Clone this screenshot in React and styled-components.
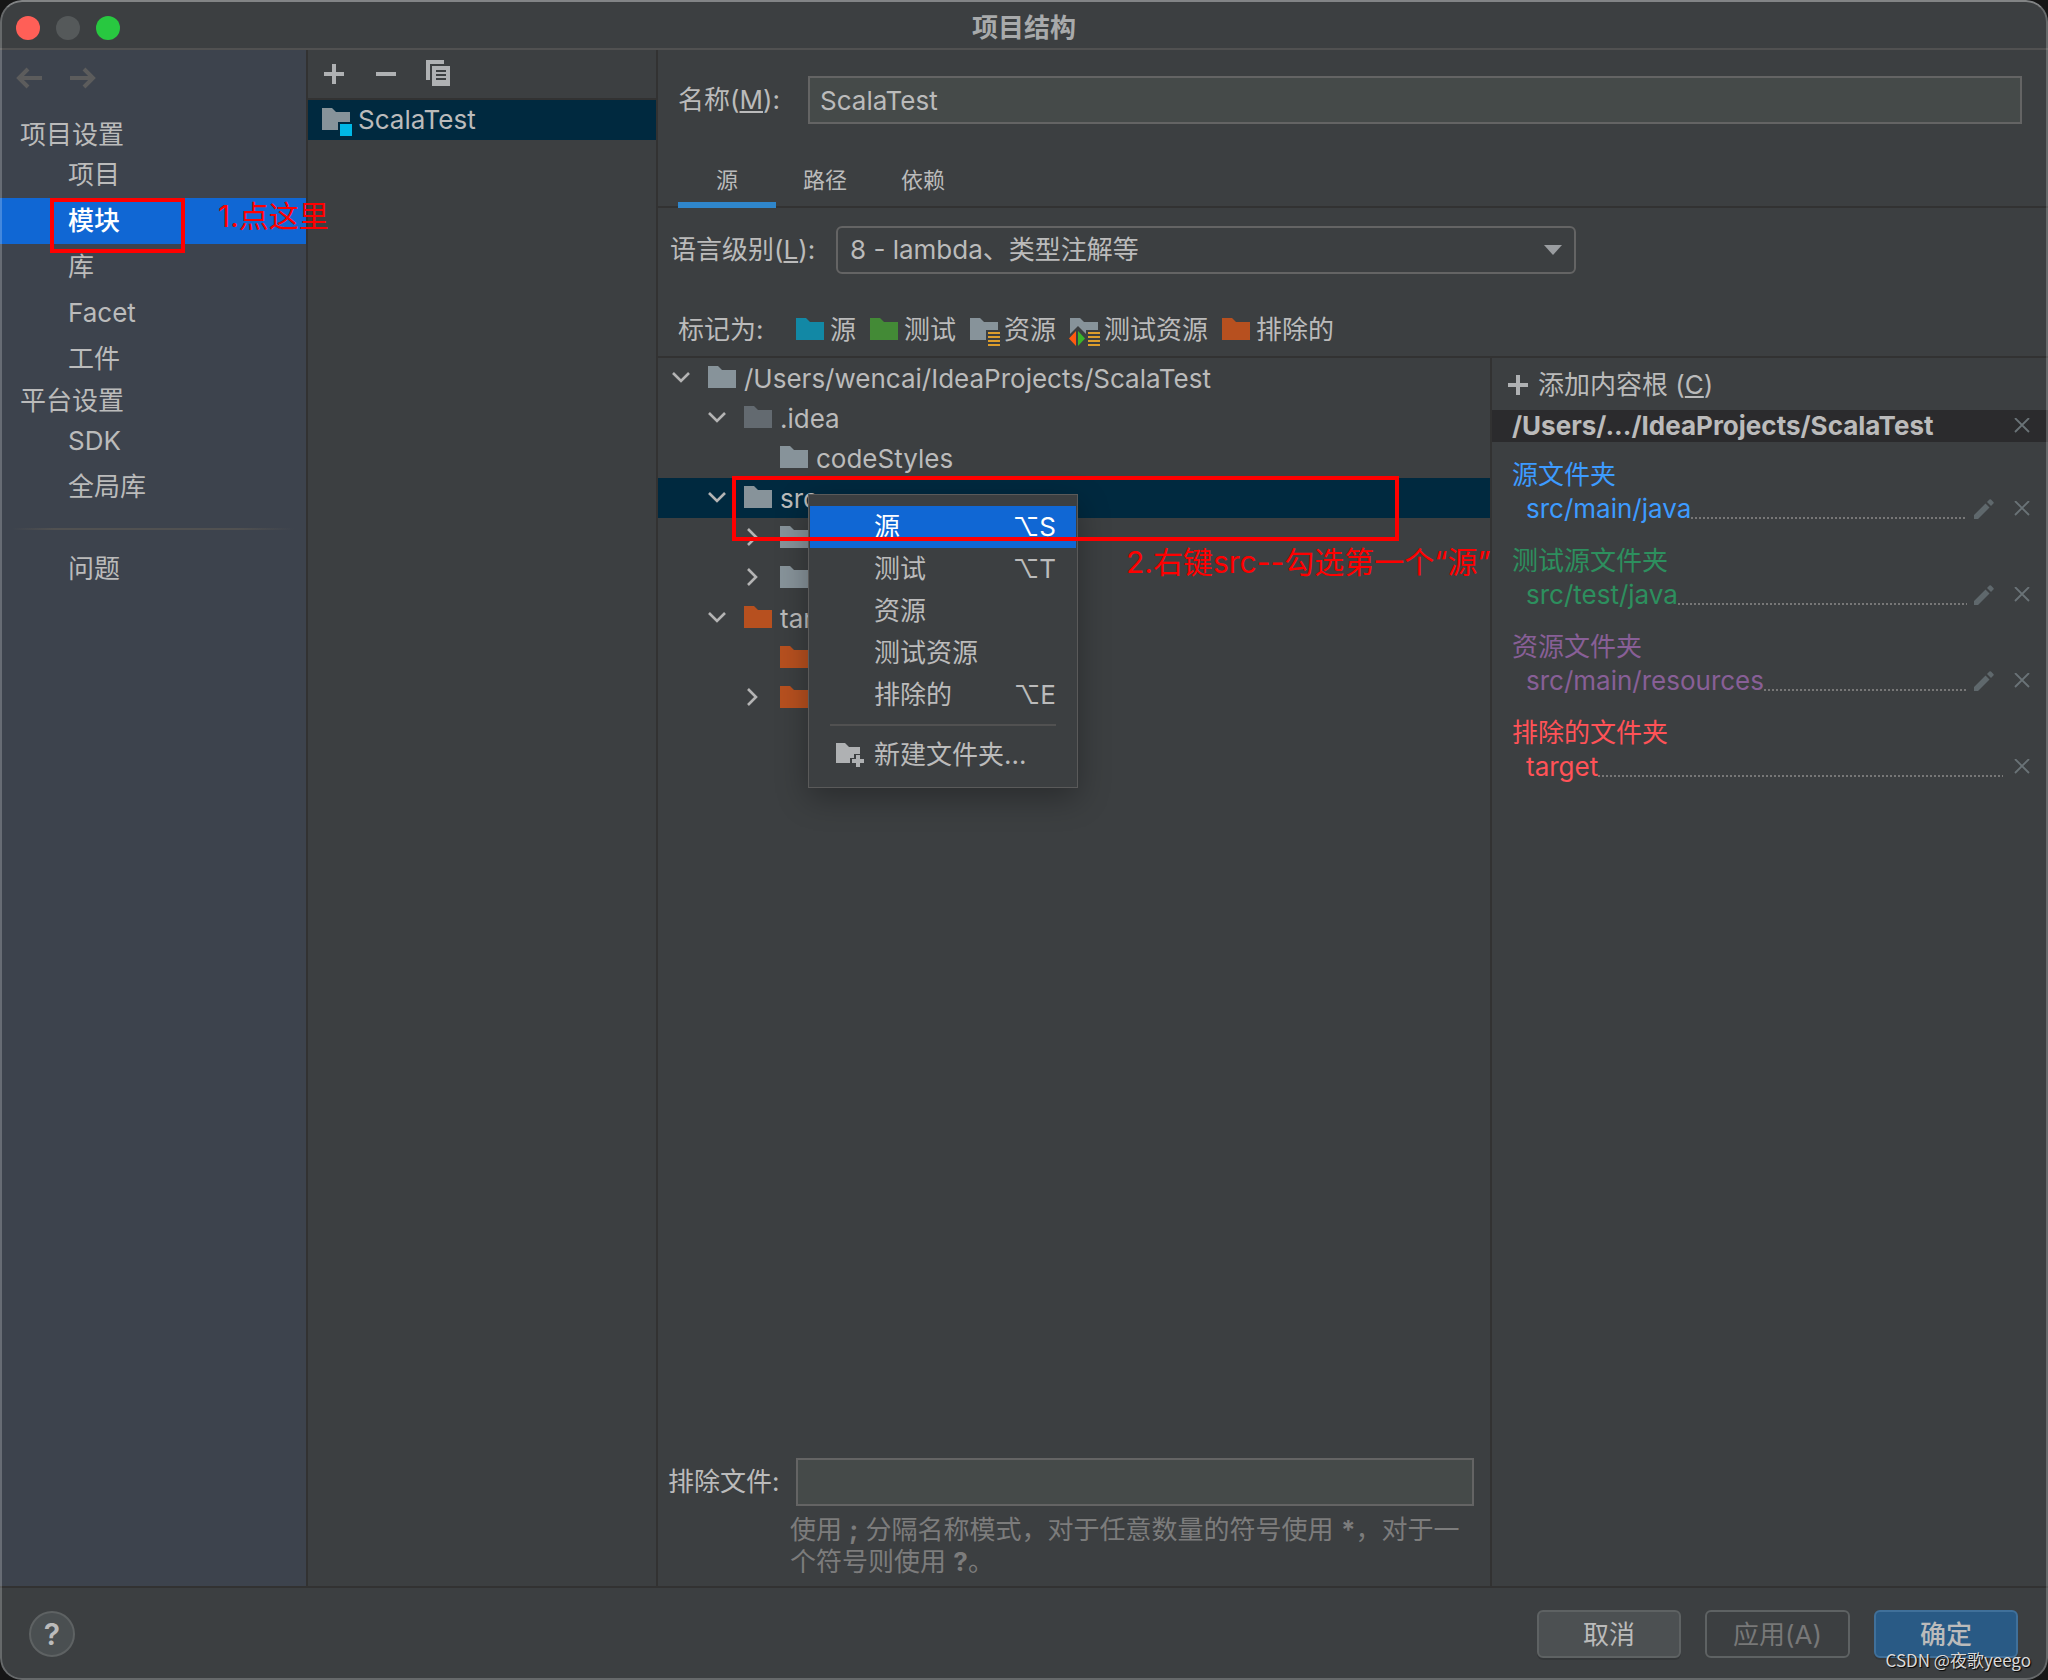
import React from 'react';
import styled, { createGlobalStyle, css } from 'styled-components';

const TEXT = '#bbbbbb';
const PANEL = '#3c3f41';
const LINE = '#323232';
const FIELD_BORDER = '#646464';
const SELECTION = '#00293f';
const ACCENT = '#1067d4';
const ANNOTATION = '#ff0000';
const FOLDER_GREY = '#87939a';
const FOLDER_DIM = '#636a70';
const FOLDER_ORANGE = '#b7501f';

const FONT_STACK = "Inter, 'Noto Sans CJK SC', sans-serif";

const GlobalStyle = createGlobalStyle`
  * {
    box-sizing: border-box;
  }

  body {
    margin: 0;
    background: #161616;
    color: ${TEXT};
    font-family: ${FONT_STACK};
    font-size: 26px;
    line-height: 32px;
  }

  button, input, select {
    margin: 0;
    font: inherit;
    color: inherit;
  }
`;

const PLAIN_BUTTON = css`
  display: flex;
  align-items: center;
  padding: 0;
  border: 0;
  background: none;
  text-align: left;
  white-space: nowrap;
  cursor: pointer;
`;

const Window = styled.div`
  position: relative;
  display: flex;
  flex-direction: column;
  min-height: 100vh;
  border-radius: 22px;
  background: ${PANEL};
  overflow: hidden;

  &::after {
    content: '';
    position: absolute;
    inset: 0;
    border: 2px solid rgba(255, 255, 255, 0.22);
    border-top-color: rgba(255, 255, 255, 0.36);
    border-radius: 22px;
    pointer-events: none;
  }
`;

const TitleBar = styled.header`
  display: grid;
  grid-template-columns: 1fr auto 1fr;
  align-items: center;
  height: 50px;
  padding: 8px 16px 0;
  border-bottom: 2px solid #515151;
`;

const Lights = styled.div`
  display: flex;
  gap: 16px;
`;

const Light = styled.button`
  width: 24px;
  height: 24px;
  padding: 0;
  border: 0;
  border-radius: 50%;
  background: ${({ $color }) => $color};
`;

const Title = styled.h1`
  margin: 0;
  font-size: 26px;
  line-height: 32px;
  font-weight: 700;
  color: #a8aaab;
`;

const Body = styled.div`
  display: grid;
  grid-template-columns: 308px 350px 1fr;
  flex: 1;
`;

const Sidebar = styled.nav`
  border-right: 2px solid ${LINE};
  background: #3d434d;
`;

const History = styled.div`
  display: flex;
  align-items: flex-start;
  gap: 26px;
  padding: 14px 15px 10px;
  height: 66px;
`;

const HistoryButton = styled.button`
  ${PLAIN_BUTTON};
  color: #5c5c5c;
`;

const SectionTitle = styled.h2`
  margin: 0;
  padding: 3px 20px 1px;
  font-size: 26px;
  line-height: 32px;
  font-weight: 400;
`;

const NavItem = styled.div`
  position: relative;
`;

const NavLink = styled.a`
  display: block;
  padding: 7px 68px;
  color: ${({ $active }) => ($active ? '#ffffff' : TEXT)};
  font-weight: ${({ $active }) => ($active ? 500 : 400)};
  background: ${({ $active }) => ($active ? ACCENT : 'none')};
  text-decoration: none;
`;

const NavDivider = styled.hr`
  height: 2px;
  margin: 18px 12px 16px;
  border: 0;
  background: linear-gradient(
    to right,
    transparent,
    #515151 15%,
    #515151 80%,
    transparent
  );
`;

const Highlight = styled.span`
  position: absolute;
  z-index: 3;
  border: 4px solid ${ANNOTATION};
  pointer-events: none;
`;

const MenuHighlight = styled(Highlight)`
  top: -2px;
  left: 74px;
  width: 667px;
  height: 65px;
`;

const NavHighlight = styled(Highlight)`
  top: 0;
  left: 50px;
  width: 135px;
  height: 55px;
`;

const Note = styled.span`
  position: absolute;
  z-index: 3;
  color: ${ANNOTATION};
  font-size: 30px;
  line-height: 36px;
  white-space: nowrap;
  pointer-events: none;
`;

const NavNote = styled(Note)`
  top: 0;
  left: 218px;
`;

const MenuNote = styled(Note)`
  top: 66px;
  left: 468px;
`;

const Modules = styled.section`
  border-right: 2px solid ${LINE};
`;

const Toolbar = styled.div`
  display: flex;
  align-items: center;
  gap: 24px;
  height: 50px;
  padding: 0 12px;
  border-bottom: 2px solid ${LINE};
`;

const ToolButton = styled.button`
  ${PLAIN_BUTTON};
  color: #afb1b3;
`;

const ModuleRow = styled.button`
  ${PLAIN_BUTTON};
  gap: 6px;
  width: 100%;
  height: 40px;
  padding: 0 14px;
  background: ${SELECTION};
`;

const Editor = styled.main`
  display: flex;
  flex-direction: column;
  min-width: 0;
`;

const FieldRow = styled.div`
  display: flex;
  align-items: center;
  padding: ${({ $padding }) => $padding};
`;

const FieldLabel = styled.label`
  flex: none;
  width: ${({ $width }) => $width};
  white-space: nowrap;
`;

const TextField = styled.input`
  flex: 1;
  min-width: 0;
  height: 48px;
  padding: 0 10px;
  border: 2px solid ${FIELD_BORDER};
  border-radius: 0;
  background: #454a49;
  outline: none;
`;

const Tabs = styled.div`
  display: flex;
  height: 60px;
  padding: 0 20px;
  border-bottom: 2px solid ${LINE};
`;

const Tab = styled.button`
  height: 60px;
  min-width: 98px;
  padding: 10px 0 0;
  border: 0;
  border-bottom: 6px solid ${({ $active }) => ($active ? '#2f86cb' : 'transparent')};
  background: none;
  font-size: 22px;
`;

const SelectBox = styled.div`
  display: grid;
  flex: 0 1 740px;
  align-items: center;

  > * {
    grid-area: 1 / 1;
  }

  > svg {
    justify-self: end;
    margin-right: 14px;
    pointer-events: none;
  }
`;

const Select = styled.select`
  width: 100%;
  height: 48px;
  padding: 0 40px 0 12px;
  border: 2px solid ${FIELD_BORDER};
  border-radius: 6px;
  background: ${PANEL};
  appearance: none;
  outline: none;
`;

const MarkRow = styled.div`
  display: flex;
  align-items: center;
  gap: 14px;
  height: 54px;
  padding: 0 20px;
  border-bottom: 2px solid ${LINE};
`;

const MarkLabel = styled.span`
  width: 104px;
`;

const MarkButton = styled.button`
  ${PLAIN_BUTTON};
  gap: 4px;
`;

const Split = styled.div`
  display: grid;
  grid-template-columns: 3fr 2fr;
  flex: 1;
`;

const TreePane = styled.section`
  display: flex;
  flex-direction: column;
  justify-content: space-between;
  min-width: 0;
  border-right: 2px solid ${LINE};
`;

const TreeRow = styled.div`
  position: relative;
  display: flex;
  align-items: center;
  height: 40px;
  padding-left: ${({ $depth }) => 14 + $depth * 36}px;
  background: ${({ $selected }) => ($selected ? SELECTION : 'none')};
`;

const TreeToggle = styled.span`
  display: flex;
  width: 36px;
`;

const TreeName = styled.span`
  padding: 2px 0 0 6px;
  white-space: nowrap;
`;

const Menu = styled.div`
  position: absolute;
  top: 16px;
  left: 150px;
  z-index: 2;
  width: 270px;
  padding: 11px 1px;
  border: 1px solid #5a5a5a;
  background: ${PANEL};
  box-shadow: 0 10px 30px rgba(0, 0, 0, 0.3);
`;

const MenuItem = styled.button`
  ${PLAIN_BUTTON};
  width: 100%;
  height: 42px;
  padding: 0 20px 0 26px;
  color: ${({ $active }) => ($active ? '#ffffff' : TEXT)};
  background: ${({ $active }) => ($active ? ACCENT : 'none')};
`;

const MenuIcon = styled.span`
  display: flex;
  width: 38px;
`;

const Shortcut = styled.kbd`
  margin-left: auto;
  font-family: Inter, 'DejaVu Sans', sans-serif;
`;

const MenuDivider = styled.hr`
  height: 2px;
  margin: 8px 20px;
  border: 0;
  background: #515151;
`;

const ExcludeForm = styled.div`
  padding: 0 16px 8px 10px;
`;

const Hint = styled.p`
  margin: 0;
  padding: 8px 0 0 122px;
  color: #7c7c7c;
`;

const RootsPane = styled.section`
  min-width: 0;
`;

const AddRoot = styled.button`
  ${PLAIN_BUTTON};
  gap: 6px;
  height: 52px;
  padding: 2px 12px 0;
`;

const RootHeader = styled.div`
  display: flex;
  align-items: center;
  justify-content: space-between;
  height: 32px;
  padding: 0 18px 0 20px;
  background: #2b2b2d;
  font-weight: 700;
`;

const RootGroup = styled.div`
  padding: 16px 18px 2px 20px;
  color: ${({ $color }) => $color};
`;

const GroupTitle = styled.h3`
  margin: 0;
  font-size: 26px;
  line-height: 34px;
  font-weight: 400;
`;

const RootEntry = styled.div`
  display: flex;
  align-items: center;
  height: 34px;
  padding-left: 14px;
`;

const Leader = styled.span`
  flex: 1;
  align-self: flex-end;
  height: 2px;
  margin: 0 7px 7px 0;
  background: repeating-linear-gradient(to right, #777777 0 2px, transparent 2px 4px);
`;

const EntryButton = styled.button`
  ${PLAIN_BUTTON};
  margin-left: ${({ $gap }) => $gap || '0'};
  color: #5f686c;
`;

const Footer = styled.footer`
  display: flex;
  align-items: center;
  gap: 24px;
  height: 94px;
  padding: 0 30px 0 29px;
  border-top: 2px solid ${LINE};
`;

const HelpButton = styled.button`
  width: 46px;
  height: 46px;
  margin-right: auto;
  padding: 0;
  border: 2px solid #5e6263;
  border-radius: 50%;
  background: #4a4f51;
  font-weight: 600;
  font-size: 30px;
  line-height: 36px;
`;

const ActionButton = styled.button`
  min-width: 144px;
  height: 48px;
  padding: 2px 26px 0;
  border: 2px solid #5e6263;
  border-radius: 6px;
  background: #4c5052;
  box-shadow: 0 2px 0 rgba(0, 0, 0, 0.12);
`;

const DisabledButton = styled(ActionButton)`
  background: none;
  color: #787878;
  box-shadow: none;
`;

const PrimaryButton = styled(ActionButton)`
  border-color: #40709a;
  background: #295a85;
  font-weight: 500;
`;

const Watermark = styled.span`
  position: absolute;
  right: 17px;
  bottom: 8px;
  z-index: 4;
  color: #dadada;
  font-family: 'Noto Sans CJK SC', sans-serif;
  font-size: 17px;
  line-height: 24px;
  text-shadow: 1px 1px 1px #000000;
`;

const FOLDER_SHAPES = {
  plain: 'M0 4h10l4 4h14v18H0z',
  module: 'M0 4h10l4 4h14v10H16v8H0z',
  resources: 'M0 4h10l4 4h14v8H16v10H0z',
  testResources: 'M0 4h10l4 4h14v8H16v4L8 12l-8 8z'
};

const FolderIcon = ({ color = FOLDER_GREY, badge = 'plain' }) => (
  <svg width="30" height="32" viewBox="0 0 30 32" overflow="visible" aria-hidden="true">
    <path d={FOLDER_SHAPES[badge]} fill={color} />
    {badge === 'module' && <path d="M18 20h12v12H18z" fill="#00b8e6" />}
    {(badge === 'resources' || badge === 'testResources') && (
      <path
        d="M18 18h12v2H18zm0 4h12v2H18zm0 4h12v2H18zm0 4h12v2H18z"
        fill="#dd9d2b"
      />
    )}
    {badge === 'testResources' && (
      <>
        <path d="M6 17v15l-7-7.500z" fill="#ff5a0f" />
        <path d="M8 17v15l7-7.500z" fill="#39b52a" />
      </>
    )}
  </svg>
);

const ChevronIcon = ({ open }) => (
  <svg width="20" height="20" viewBox="0 0 20 20" aria-hidden="true">
    <path
      d={open ? 'M1 5l8 8 8-8' : 'M4 1l8 8-8 8'}
      fill="none"
      stroke="#b4b4b4"
      strokeWidth="2.6"
    />
  </svg>
);

const ArrowIcon = ({ forward }) => (
  <svg width="28" height="28" viewBox="0 0 28 28" aria-hidden="true">
    <path
      d={forward ? 'M1 14h24M15 5l9 9-9 9' : 'M27 14H4M13 5l-9 9 9 9'}
      fill="none"
      stroke="currentColor"
      strokeWidth="4"
    />
  </svg>
);

const PlusIcon = () => (
  <svg width="28" height="28" viewBox="0 0 28 28" aria-hidden="true">
    <path d="M12 4h4v8h8v4h-8v8h-4v-8H4v-4h8z" fill="#afb1b3" />
  </svg>
);

const MinusIcon = () => (
  <svg width="28" height="28" viewBox="0 0 28 28" aria-hidden="true">
    <path d="M4 12h20v4H4z" fill="currentColor" />
  </svg>
);

const CopyIcon = () => (
  <svg width="28" height="28" viewBox="0 0 28 28" aria-hidden="true">
    <path d="M2 0h18v4H6v16H2z" fill="currentColor" />
    <path
      d="M8 6h18v20H8zM12 10v2h10v-2zm0 4v2h10v-2zm0 4v2h10v-2z"
      fill="currentColor"
      fillRule="evenodd"
    />
  </svg>
);

const CloseIcon = () => (
  <svg width="16" height="16" viewBox="0 0 16 16" aria-hidden="true">
    <path d="M1 0l14 14M15 0L1 14" stroke="#6a7377" strokeWidth="1.8" />
  </svg>
);

const PencilIcon = () => (
  <svg width="20" height="20" viewBox="0 0 20 20" aria-hidden="true">
    <path
      d="M0 16L11.500 4.500l4 4L4 20H0zM13 3l2.400-2.400q.8-.8 1.600 0l2.400 2.400q.8.8 0 1.600L17 7z"
      fill="currentColor"
    />
  </svg>
);

const NewFolderIcon = () => (
  <svg width="28" height="28" viewBox="0 0 28 28" aria-hidden="true">
    <path d="M0 2h9l4 4h11v7h-6v4h-4v5H0z" fill="#afb1b3" />
    <path d="M20 14h4v4h4v4h-4v4h-4v-4h-4v-4h4z" fill="#afb1b3" />
  </svg>
);

const settings = [
  {
    title: '项目设置',
    items: ['项目', '模块', '库', 'Facet', '工件']
  },
  {
    title: '平台设置',
    items: ['SDK', '全局库']
  }
];

const marks = [
  { name: '源', color: '#1288a5' },
  { name: '测试', color: '#438a36' },
  { name: '资源', badge: 'resources' },
  { name: '测试资源', badge: 'testResources' },
  { name: '排除的', color: FOLDER_ORANGE }
];

const tree = [
  { name: '/Users/wencai/IdeaProjects/ScalaTest', depth: 0, open: true },
  { name: '.idea', depth: 1, open: true, color: FOLDER_DIM },
  { name: 'codeStyles', depth: 2, leaf: true },
  { name: 'src', depth: 1, open: true, selected: true },
  { name: 'main', depth: 2 },
  { name: 'test', depth: 2 },
  { name: 'target', depth: 1, open: true, color: FOLDER_ORANGE },
  { name: 'classes', depth: 2, leaf: true, color: FOLDER_ORANGE },
  { name: 'gen', depth: 2, color: FOLDER_ORANGE }
];

const menuItems = [
  { name: '源', shortcut: '⌥S', active: true },
  { name: '测试', shortcut: '⌥T' },
  { name: '资源' },
  { name: '测试资源' },
  { name: '排除的', shortcut: '⌥E' }
];

const roots = [
  { title: '源文件夹', path: 'src/main/java', color: '#3d9bff', editable: true },
  { title: '测试源文件夹', path: 'src/test/java', color: '#2d8f5e', editable: true },
  { title: '资源文件夹', path: 'src/main/resources', color: '#885f97', editable: true },
  { title: '排除的文件夹', path: 'target', color: '#ff5257' }
];

const SettingsNav = () => (
  <Sidebar>
    <History>
      <HistoryButton aria-label="后退">
        <ArrowIcon />
      </HistoryButton>
      <HistoryButton aria-label="前进">
        <ArrowIcon forward />
      </HistoryButton>
    </History>
    {settings.map(({ title, items }) => (
      <React.Fragment key={title}>
        <SectionTitle>{title}</SectionTitle>
        {items.map(item => (
          <NavItem key={item}>
            <NavLink href="#" $active={item === '模块'}>
              {item}
            </NavLink>
            {item === '模块' && (
              <>
                <NavHighlight />
                <NavNote>1.点这里</NavNote>
              </>
            )}
          </NavItem>
        ))}
      </React.Fragment>
    ))}
    <NavDivider />
    <NavLink href="#">问题</NavLink>
  </Sidebar>
);

const ModuleList = () => (
  <Modules>
    <Toolbar>
      <ToolButton aria-label="添加">
        <PlusIcon />
      </ToolButton>
      <ToolButton aria-label="移除">
        <MinusIcon />
      </ToolButton>
      <ToolButton aria-label="复制">
        <CopyIcon />
      </ToolButton>
    </Toolbar>
    <ModuleRow>
      <FolderIcon badge="module" />
      ScalaTest
    </ModuleRow>
  </Modules>
);

const ContextMenu = () => (
  <Menu role="menu">
    {menuItems.map(({ name, shortcut, active }) => (
      <MenuItem key={name} role="menuitem" $active={active}>
        <MenuIcon />
        {name}
        {shortcut && <Shortcut>{shortcut}</Shortcut>}
      </MenuItem>
    ))}
    <MenuDivider />
    <MenuItem role="menuitem">
      <MenuIcon>
        <NewFolderIcon />
      </MenuIcon>
      新建文件夹...
    </MenuItem>
  </Menu>
);

const SourceTree = () => (
  <div role="tree">
    {tree.map(({ name, depth, open, leaf, selected, color }) => (
      <TreeRow
        key={name}
        role="treeitem"
        aria-selected={!!selected}
        $depth={depth}
        $selected={selected}
      >
        <TreeToggle>{!leaf && <ChevronIcon open={open} />}</TreeToggle>
        <FolderIcon color={color} />
        <TreeName>{name}</TreeName>
        {selected && (
          <>
            <ContextMenu />
            <MenuHighlight />
            <MenuNote>2.右键src--勾选第一个“源”</MenuNote>
          </>
        )}
      </TreeRow>
    ))}
  </div>
);

const ContentRoots = () => (
  <RootsPane>
    <AddRoot>
      <PlusIcon />
      <span>
        添加内容根 (<u>C</u>)
      </span>
    </AddRoot>
    <RootHeader>
      /Users/.../IdeaProjects/ScalaTest
      <EntryButton aria-label="移除内容根">
        <CloseIcon />
      </EntryButton>
    </RootHeader>
    {roots.map(({ title, path, color, editable }) => (
      <RootGroup key={title} $color={color}>
        <GroupTitle>{title}</GroupTitle>
        <RootEntry>
          {path}
          <Leader />
          {editable && (
            <EntryButton aria-label="编辑">
              <PencilIcon />
            </EntryButton>
          )}
          <EntryButton aria-label="移除" $gap={editable ? '20px' : '4px'}>
            <CloseIcon />
          </EntryButton>
        </RootEntry>
      </RootGroup>
    ))}
  </RootsPane>
);

const App = () => (
  <>
    <GlobalStyle />
    <Window>
      <TitleBar>
        <Lights>
          <Light $color="#ff5f57" aria-label="关闭" />
          <Light $color="#55595a" aria-label="最小化" />
          <Light $color="#28c840" aria-label="缩放" />
        </Lights>
        <Title>项目结构</Title>
      </TitleBar>
      <Body>
        <SettingsNav />
        <ModuleList />
        <Editor>
          <FieldRow $padding="26px 26px 24px 20px">
            <FieldLabel htmlFor="name" $width="130px">
              名称(<u>M</u>):
            </FieldLabel>
            <TextField id="name" defaultValue="ScalaTest" />
          </FieldRow>
          <Tabs role="tablist">
            <Tab role="tab" aria-selected="true" $active>
              源
            </Tab>
            <Tab role="tab">路径</Tab>
            <Tab role="tab">依赖</Tab>
          </Tabs>
          <FieldRow $padding="18px 20px 30px 12px">
            <FieldLabel htmlFor="level" $width="166px">
              语言级别(<u>L</u>):
            </FieldLabel>
            <SelectBox>
              <Select id="level">
                <option>8 - lambda、类型注解等</option>
              </Select>
              <svg width="18" height="10" viewBox="0 0 18 10" aria-hidden="true">
                <path d="M0 0h18l-9 10z" fill="#9a9da0" />
              </svg>
            </SelectBox>
          </FieldRow>
          <MarkRow>
            <MarkLabel>标记为:</MarkLabel>
            {marks.map(({ name, color, badge }) => (
              <MarkButton key={name}>
                <FolderIcon color={color} badge={badge} />
                {name}
              </MarkButton>
            ))}
          </MarkRow>
          <Split>
            <TreePane>
              <SourceTree />
              <ExcludeForm>
                <FieldRow $padding="0">
                  <FieldLabel htmlFor="exclude" $width="128px">
                    排除文件:
                  </FieldLabel>
                  <TextField id="exclude" />
                </FieldRow>
                <Hint>
                  使用 <b>;</b> 分隔名称模式，对于任意数量的符号使用 <b>*</b>
                  ，对于一个符号则使用 <b>?</b>。
                </Hint>
              </ExcludeForm>
            </TreePane>
            <ContentRoots />
          </Split>
        </Editor>
      </Body>
      <Footer>
        <HelpButton aria-label="帮助">?</HelpButton>
        <ActionButton>取消</ActionButton>
        <DisabledButton disabled>应用(A)</DisabledButton>
        <PrimaryButton>确定</PrimaryButton>
      </Footer>
      <Watermark>CSDN @夜歌yeego</Watermark>
    </Window>
  </>
);

export default App;
